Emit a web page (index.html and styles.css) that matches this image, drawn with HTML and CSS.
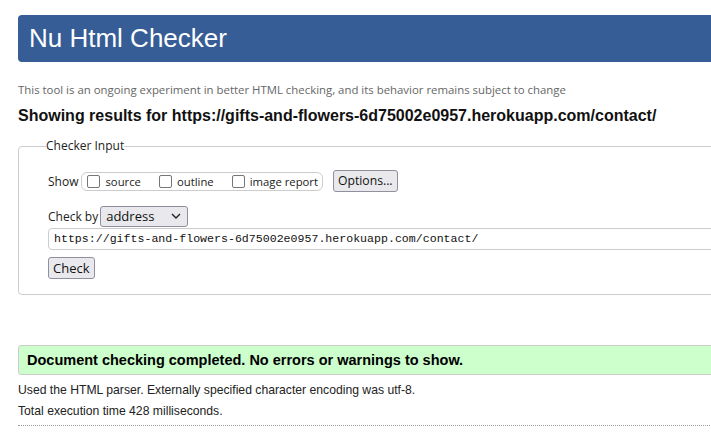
FILE: index.html
```html
<!DOCTYPE html>
<html>
<head>
<meta charset="utf-8">
<title>Nu Html Checker</title>
<link rel="stylesheet" href="styles.css">
</head>
<body>
<div class="page">
  <h1 class="banner">Nu Html Checker</h1>
  <p class="tagline">This tool is an ongoing experiment in better HTML checking, and its behavior remains subject to change</p>
  <h2 class="results-title">Showing results for https://gifts-and-flowers-6d75002e0957.herokuapp.com/contact/</h2>
  <form class="checker">
    <fieldset class="checker-input">
      <legend>Checker Input</legend>
      <div class="row show-row">
        <span class="label">Show</span>
        <span class="options-group">
          <label class="opt"><span class="box"></span>source</label>
          <label class="opt"><span class="box"></span>outline</label>
          <label class="opt"><span class="box"></span>image report</label>
        </span>
        <button type="button" class="btn options-btn">Options...</button>
      </div>
      <div class="row checkby-row">
        <span class="label">Check by</span>
        <span class="select">address
          <svg class="chev" width="10" height="6" viewBox="0 0 10 6"><path d="M1 1 L5 5 L9 1" fill="none" stroke="#222" stroke-width="1.4"/></svg>
        </span>
      </div>
      <div class="url-input">https://gifts-and-flowers-6d75002e0957.herokuapp.com/contact/</div>
      <div class="row"><button type="button" class="btn check-btn">Check</button></div>
    </fieldset>
  </form>
  <div class="success">Document checking completed. No errors or warnings to show.</div>
  <p class="details first">Used the HTML parser. Externally specified character encoding was utf-8.</p>
  <p class="details">Total execution time 428 milliseconds.</p>
  <div class="dotted"></div>
</div>
</body>
</html>
```

FILE: styles.css
```css
html, body {
  margin: 0;
  padding: 0;
  background: #fff;
  overflow: hidden;
}
body {
  font-family: "Liberation Sans", Arial, sans-serif;
  color: #000;
}
.page {
  padding: 15px 0 0 18px;
  width: 740px;
}
.banner {
  margin: 0;
  height: 47px;
  box-sizing: border-box;
  background: #365d95;
  color: #fff;
  border-radius: 4px;
  font-family: "Liberation Sans", Arial, sans-serif;
  font-weight: normal;
  font-size: 26px;
  line-height: 47px;
  padding-left: 11px;
}
.tagline {
  margin: 20px 0 0;
  font-family: "Open Sans", sans-serif;
  font-size: 11.4px;
  line-height: 16px;
  color: #666;
}
.results-title {
  margin: 8px 0 0;
  font-size: 16px;
  line-height: 20px;
  font-weight: bold;
  color: #111;
}
.checker {
  margin: 12px 0 0;
}
.checker-input {
  margin: 0;
  border: 1px solid #ccc;
  border-radius: 4px;
  padding: 16px 0 15px 29px;
  font-family: "Open Sans", sans-serif;
  font-size: 12px;
  color: #222;
}
.checker-input legend {
  padding: 0;
  margin-left: -2px;
  font-size: 12px;
  line-height: 16px;
  color: #222;
}
.row {
  display: flex;
  align-items: center;
}
.label {
  margin-right: 3px;
}
.show-row {
  height: 22px;
}
.options-group {
  display: flex;
  align-items: center;
  height: 19px;
  box-sizing: border-box;
  border: 1px solid #ccc;
  border-radius: 6px;
  padding: 0 4px 0 5px;
  font-size: 11.3px;
}
.opt {
  display: flex;
  align-items: center;
  margin-right: 18px;
}
.opt:last-child {
  margin-right: 0;
}
.box {
  width: 11px;
  height: 11px;
  border: 1px solid #767676;
  border-radius: 2px;
  margin-right: 5px;
  box-sizing: content-box;
}
.btn {
  font-family: "Open Sans", sans-serif;
  font-size: 12px;
  color: #111;
  background: #e9e9ed;
  border: 1px solid #8f8f9d;
  border-radius: 3px;
  padding: 0 4px;
  height: 22px;
  line-height: 18px;
}
.options-btn {
  margin-left: 10px;
  font-size: 12.2px;
}
.checkby-row {
  margin-top: 13px;
  height: 22px;
}
.select {
  display: flex;
  align-items: center;
  justify-content: space-between;
  width: 88px;
  height: 21px;
  box-sizing: border-box;
  border: 1px solid #8f8f9d;
  border-radius: 3px;
  background: #e9e9ed;
  padding: 0 6px 0 5px;
  font-size: 13px;
  color: #111;
  margin-left: -1px;
}
.url-input {
  margin-top: 1px;
  height: 22px;
  box-sizing: border-box;
  border: 1px solid #ccc;
  border-radius: 4px;
  padding: 0 5px;
  font-family: "Liberation Mono", monospace;
  font-size: 11.6px;
  line-height: 20px;
  color: #111;
}
.check-btn {
  margin-top: 7px;
  height: 22px;
  font-size: 13px;
}
.success {
  margin-top: 50px;
  height: 30px;
  box-sizing: border-box;
  border: 1px solid #ccc;
  border-radius: 3px;
  background: #ccffcc;
  padding-left: 8px;
  font-weight: bold;
  font-size: 14.5px;
  line-height: 28px;
  color: #000;
}
.details {
  margin: 6px 0 0;
  font-size: 12.2px;
  line-height: 15px;
  color: #222;
}
.details.first {
  margin-top: 8px;
}
.dotted {
  margin-top: 6px;
  border-top: 1px dotted #999;
}
```
